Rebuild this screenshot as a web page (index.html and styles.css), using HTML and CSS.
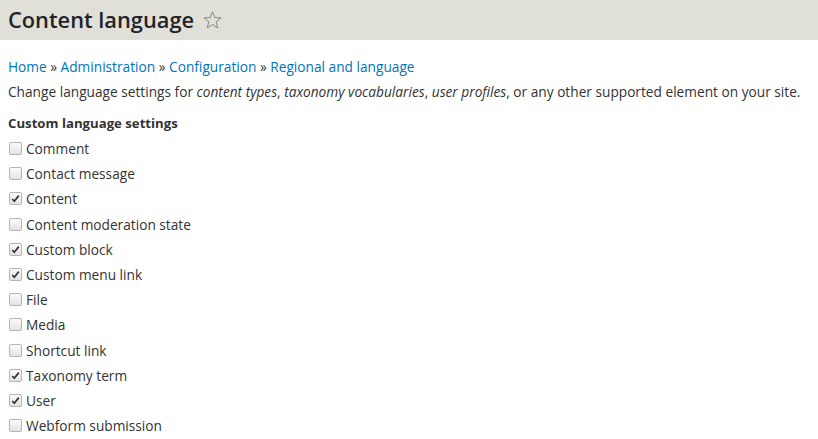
FILE: index.html
```html
<!DOCTYPE html>
<html lang="en">
<head>
    <meta charset="UTF-8">
    <title>Content language</title>
    <link rel="stylesheet" href="styles.css">
</head>
<body>
    <div class="page-header">
        <h1>Content language
            <svg class="star" width="19" height="18" viewBox="0 0 19 18"><polygon points="9.5,0.8 11.8,6.6 18,6.9 13.2,10.8 14.8,17 9.5,13.5 4.2,17 5.8,10.8 1,6.9 7.2,6.6" fill="none" stroke="#868678" stroke-width="1"/></svg>
        </h1>
    </div>

    <div class="content">
        <!-- Breadcrumb -->
        <nav class="breadcrumb">
            <a href="#">Home</a> » <a href="#">Administration</a> » <a href="#">Configuration</a> » <a href="#">Regional and language</a>
        </nav>

        <p class="intro">Change language settings for <em>content types</em>, <em>taxonomy vocabularies</em>, <em>user profiles</em>, or any other supported element on your site.</p>

        <h2>Custom language settings</h2>

        <div class="options">
            <label class="option"><span class="box"></span>Comment</label>
            <label class="option"><span class="box"></span>Contact message</label>
            <label class="option checked"><span class="box"><svg viewBox="0 0 13 13"><path d="M3.2 7 L5.3 9.3 L9.8 3.6" fill="none" stroke="#333" stroke-width="1.7"/></svg></span>Content</label>
            <label class="option"><span class="box"></span>Content moderation state</label>
            <label class="option checked"><span class="box"><svg viewBox="0 0 13 13"><path d="M3.2 7 L5.3 9.3 L9.8 3.6" fill="none" stroke="#333" stroke-width="1.7"/></svg></span>Custom block</label>
            <label class="option checked"><span class="box"><svg viewBox="0 0 13 13"><path d="M3.2 7 L5.3 9.3 L9.8 3.6" fill="none" stroke="#333" stroke-width="1.7"/></svg></span>Custom menu link</label>
            <label class="option"><span class="box"></span>File</label>
            <label class="option"><span class="box"></span>Media</label>
            <label class="option"><span class="box"></span>Shortcut link</label>
            <label class="option checked"><span class="box"><svg viewBox="0 0 13 13"><path d="M3.2 7 L5.3 9.3 L9.8 3.6" fill="none" stroke="#333" stroke-width="1.7"/></svg></span>Taxonomy term</label>
            <label class="option checked"><span class="box"><svg viewBox="0 0 13 13"><path d="M3.2 7 L5.3 9.3 L9.8 3.6" fill="none" stroke="#333" stroke-width="1.7"/></svg></span>User</label>
            <label class="option"><span class="box"></span>Webform submission</label>
        </div>
    </div>
</body>
</html>
```

FILE: styles.css
```css
body {
    font-family: "Open Sans", "Noto Sans", sans-serif;
    font-size: 13.7px;
    color: #333;
    margin: 0;
    padding: 0;
    background: #fff;
}

.page-header {
    background-color: #e0e0d8;
    height: 40px;
    padding: 0 8px;
    box-sizing: border-box;
}

h1 {
    margin: 0;
    font-size: 21.8px;
    font-weight: 600;
    color: #232429;
    line-height: 40px;
    display: flex;
    align-items: center;
    gap: 9px;
}

.star {
    display: block;
    margin-top: -1px;
}

.content {
    padding: 0 8px;
}

.breadcrumb {
    margin-top: 17px;
    line-height: 19px;
    color: #333;
}

.breadcrumb a {
    color: #0074bd;
    text-decoration: none;
}

.intro {
    margin: 6px 0 0;
    line-height: 19px;
}

h2 {
    margin: 13px 0 0;
    font-size: 13.2px;
    font-weight: 700;
    line-height: 19px;
}

.options {
    display: flex;
    flex-direction: column;
    margin-top: 3px;
}

.option {
    display: flex;
    align-items: center;
    height: 25.2px;
}

.box {
    width: 11px;
    height: 11px;
    margin: 0 4px 0 1px;
    border: 1px solid #b4b4b4;
    border-radius: 2px;
    background: linear-gradient(#fcfcfc, #e3e3e3);
    position: relative;
    flex-shrink: 0;
}

.box svg {
    position: absolute;
    left: -1px;
    top: -1px;
    width: 13px;
    height: 13px;
}
```
